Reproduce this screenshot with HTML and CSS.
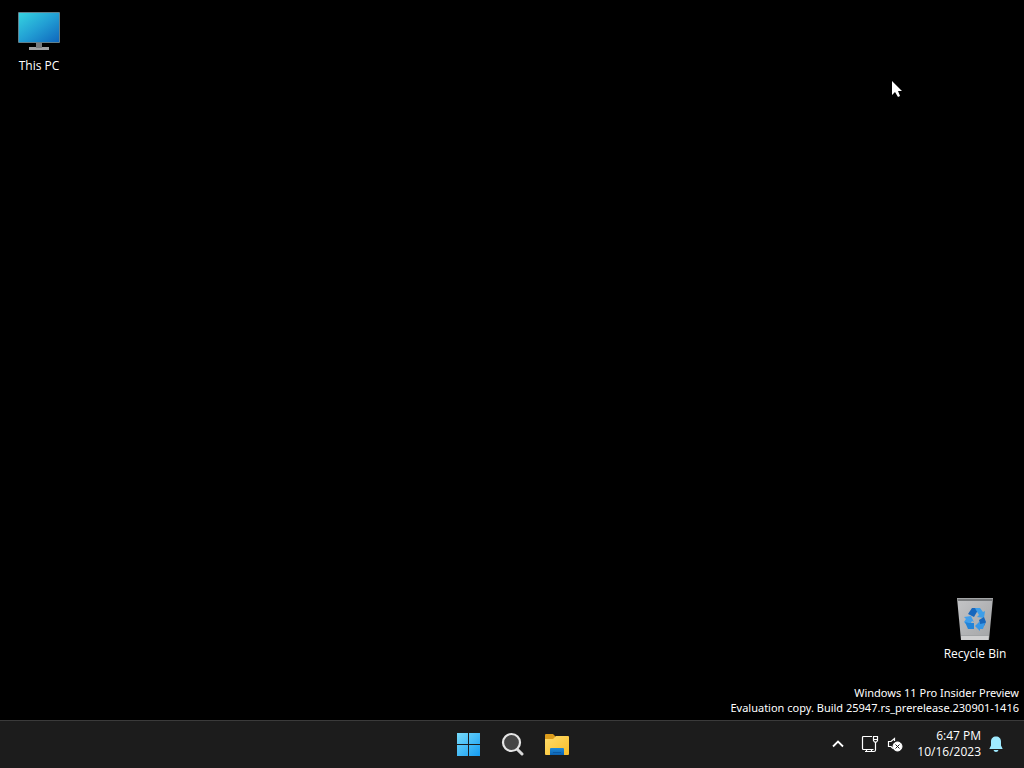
FILE: index.html
```html
<!DOCTYPE html>
<html lang="en">
<head>
    <meta charset="UTF-8">
    <meta name="viewport" content="width=device-width, initial-scale=1.0">
    <title>Desktop</title>
    <link rel="stylesheet" href="styles.css">
</head>
<body>
    <main class="desktop">
        <button class="desktop-icon this-pc">
            <svg width="44" height="44" viewBox="0 0 44 44" aria-hidden="true">
                <defs>
                    <linearGradient id="screen" x1="0" y1="0" x2="1" y2="1">
                        <stop offset="0" stop-color="#35d3e0"/>
                        <stop offset="0.5" stop-color="#229fd4"/>
                        <stop offset="1" stop-color="#0f67bd"/>
                    </linearGradient>
                </defs>
                <rect x="1" y="2" width="42" height="31" rx="1" fill="#62808c"/>
                <rect x="2" y="3" width="40" height="29" fill="url(#screen)"/>
                <rect x="12" y="37" width="20" height="3" fill="#a0a2a4"/>
                <rect x="19" y="33" width="6" height="5" fill="#777b7e"/>
            </svg>
            <span>This PC</span>
        </button>

        <button class="desktop-icon recycle-bin">
            <svg width="44" height="44" viewBox="0 0 44 44" aria-hidden="true">
                <defs>
                    <linearGradient id="bin" x1="0" y1="0" x2="1" y2="1">
                        <stop offset="0" stop-color="#c4c5c7"/>
                        <stop offset="1" stop-color="#a2a3a5"/>
                    </linearGradient>
                </defs>
                <path d="M4 0h36l-4 42H8z" fill="url(#bin)"/>
                <path d="M4 0h36l-1 3H5z" fill="#77797b"/>
                <path d="M4 0h36v1H4z" fill="#a5a6a8"/>
                <path d="M8 37h28l-1 5H8z" fill="#cfcfd0"/>
                <path d="M8 37h28v1H8z" fill="#a2a4a6"/>
                <!-- recycling arrows -->
                <path d="M15 16l4-6h4l2 2-4 7z" fill="#1767bd"/>
                <path d="M22 10h5l3 4 2-1-1 7-7-1 2-2-3-5z" fill="#3d9ee9"/>
                <path d="M11 19l7-1 3 6-2-1-3 6-5-5 2-3z" fill="#429feb"/>
                <path d="M12 24l4 1h5v6h-6z" fill="#2384d8"/>
                <path d="M26 22l5-3 2 5-2 4-3 1z" fill="#1767bd"/>
                <path d="M22 28l5-5v3l5-1-2 6h-3v2z" fill="#3797e7"/>
            </svg>
            <span>Recycle Bin</span>
        </button>

        <p class="watermark">
            Windows 11 Pro Insider Preview<br>
            Evaluation copy. Build 25947.rs_prerelease.230901-1416
        </p>

        <svg class="cursor" width="12" height="19" viewBox="0 0 12 19" aria-hidden="true">
            <path d="M1 1v14l3-3 3 5 2-1-2-5h4z" fill="#fff"/>
        </svg>
    </main>

    <footer class="taskbar">
        <nav class="apps" aria-label="Taskbar">
            <button class="app" aria-label="Start">
                <svg width="24" height="24" viewBox="0 0 24 24">
                    <defs>
                        <linearGradient id="start" gradientUnits="userSpaceOnUse" x1="0" y1="0" x2="24" y2="24">
                            <stop offset="0" stop-color="#79dcfa"/>
                            <stop offset="1" stop-color="#129af2"/>
                        </linearGradient>
                    </defs>
                    <path d="M0 1h11v11H0zM12 1h11v11H12zM0 13h11v11H0zM12 13h11v11H12z" fill="url(#start)"/>
                </svg>
            </button>
            <button class="app" aria-label="Search">
                <svg width="24" height="24" viewBox="0 0 24 24">
                    <path d="M16 17l5 5" stroke="#d8d8d8" stroke-width="3" stroke-linecap="round"/>
                    <circle cx="10.500" cy="10.500" r="8.500" fill="#454545" stroke="#e4e4e4" stroke-width="2.200"/>
                </svg>
            </button>
            <button class="app" aria-label="File Explorer">
                <svg width="26" height="24" viewBox="0 0 26 24">
                    <defs>
                        <linearGradient id="folder" x1="0" y1="0" x2="1" y2="1">
                            <stop offset="0" stop-color="#ffdc6b"/>
                            <stop offset="1" stop-color="#f9bd29"/>
                        </linearGradient>
                        <linearGradient id="pocket" x1="0" y1="0" x2="0" y2="1">
                            <stop offset="0" stop-color="#1f8ad8"/>
                            <stop offset="1" stop-color="#0c62b2"/>
                        </linearGradient>
                    </defs>
                    <path d="M1 3q0-1 1-1h7l3 3v4H1z" fill="#dc9c1b"/>
                    <path d="M1 7h8l3-3h12q1 0 1 1v17q0 1-1 1H2q-1 0-1-1z" fill="url(#folder)"/>
                    <path d="M6 23v-6q0-1 1-1h12q1 0 1 1v6z" fill="url(#pocket)"/>
                    <path d="M9 20h8v1H9z" fill="#0b5aa5"/>
                </svg>
            </button>
        </nav>

        <div class="tray">
            <button class="tray-button chevron" aria-label="Show hidden icons">
                <svg width="12" height="8" viewBox="0 0 12 8">
                    <path d="M1 6.500l5-5 5 5" fill="none" stroke="#fff" stroke-width="1.800"/>
                </svg>
            </button>
            <button class="tray-button status" aria-label="Network and volume">
                <svg width="18" height="18" viewBox="0 0 18 18" fill="none" stroke="#fff" stroke-width="1.200">
                    <path d="M11 1.500H2.500q-1 0-1 1v11q0 1 1 1H12.500M5.500 14.500v2M10.500 14.500v2M4 16.500h9"/>
                    <path d="M12.500 1.500h4v4l-1 1.500h-2l-1-1.500zM12.500 4.500h4M14.500 7v8q0 1.500-1.500 1.500"/>
                </svg>
                <svg width="18" height="18" viewBox="0 0 18 18" fill="none" stroke="#fff">
                    <path d="M8.500 6V3.500L5 6.500H2.500v5H5l2 2" stroke-width="1.200"/>
                    <circle cx="11.500" cy="11.500" r="4.500" fill="#fff"/>
                    <path d="M9.500 9.500l4 4M13.500 9.500l-4 4" stroke="#1c1c1c"/>
                </svg>
            </button>
            <button class="tray-button clock">
                <time datetime="2023-10-16T18:47">6:47 PM<br>10/16/2023</time>
                <svg width="16" height="18" viewBox="0 0 16 18" aria-hidden="true">
                    <path d="M8 1.500c-3 0-5 2-5 5v4l-1.500 3v.5h13v-.5l-1.500-3v-4c0-3-2-5-5-5zM5.500 15h5q-.5 2-2.500 2t-2.500-2z" fill="#9feaff"/>
                </svg>
            </button>
        </div>
    </footer>
</body>
</html>
```
FILE: styles.css
```css
:root {
    --taskbar-color: #1c1c1c;
    --border-color: #3a3a3a;
    --text-color: #fff;
}

* {
    box-sizing: border-box;
}

body {
    margin: 0;
    min-height: 100vh;
    display: flex;
    flex-direction: column;
    background-color: #000;
    color: var(--text-color);
    font-family: "Open Sans", "Noto Sans", sans-serif;
    font-size: 12px;
    line-height: 15px;
}

button {
    padding: 0;
    border: none;
    background: none;
    color: inherit;
    font: inherit;
}

svg {
    display: block;
    flex: none;
}

.desktop {
    position: relative;
    flex: 1;
    overflow: hidden;
}

/* icons sit freely on the desktop */
.desktop-icon {
    position: absolute;
    width: 76px;
    display: flex;
    flex-direction: column;
    align-items: center;
    gap: 4px;
}

.this-pc {
    top: 10px;
    left: 1px;
}

.recycle-bin {
    right: 11px;
    bottom: 59px;
}

.watermark {
    position: absolute;
    right: 5px;
    bottom: 5px;
    margin: 0;
    font-family: "Noto Sans", "Open Sans", sans-serif;
    font-size: 11px;
    text-align: right;
    white-space: nowrap;
}

.cursor {
    position: absolute;
    top: 80px;
    right: 121px;
}

.taskbar {
    display: grid;
    grid-template-columns: 1fr auto 1fr;
    align-items: stretch;
    height: 48px;
    padding-bottom: 1px;
    background-color: var(--taskbar-color);
    border-top: 1px solid var(--border-color);
}

.apps {
    grid-column: 2;
    display: flex;
    padding-left: 2px;
}

.app {
    width: 44px;
    display: flex;
    align-items: center;
    justify-content: center;
}

.tray {
    display: flex;
    justify-content: flex-end;
    padding-right: 20px;
}

.tray-button {
    display: flex;
    align-items: center;
}

.chevron {
    padding: 0 9px;
}

.status {
    gap: 7px;
    padding: 0 8px;
}

.clock {
    gap: 7px;
    padding-left: 5px;
    text-align: right;
    line-height: 16px;
}
```
